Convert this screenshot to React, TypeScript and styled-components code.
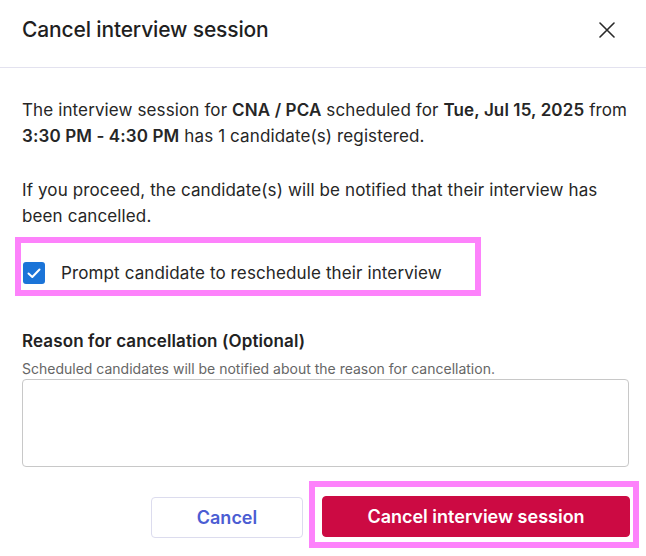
import React from 'react';
import styled, { createGlobalStyle } from 'styled-components';

const GlobalStyle = createGlobalStyle`
  html, body {
    margin: 0;
    padding: 0;
    background: #ffffff;
  }
  body {
    font-family: Inter, "Noto Sans", "Liberation Sans", sans-serif;
    color: #262626;
  }
`;

const Dialog = styled.div`
  width: 646px;
  height: 556px;
  background: #fff;
  overflow: hidden;
`;

const Header = styled.div`
  height: 68px;
  box-sizing: border-box;
  padding: 17px 31px 0 22px;
  display: flex;
  justify-content: space-between;
  align-items: flex-start;
  border-bottom: 1px solid #e3e2ef;
`;

const Title = styled.h2`
  margin: 0;
  font-size: 21px;
  line-height: 25px;
  font-weight: 500;
  color: #1f1f1f;
  letter-spacing: -0.15px;
`;

const CloseButton = styled.button`
  border: none;
  background: none;
  padding: 0;
  margin-top: 5px;
  width: 16px;
  height: 16px;
  cursor: pointer;
  color: #2a2a2a;
  display: flex;
`;

const Body = styled.div`
  padding: 29px 17px 0 22px;
`;

const Paragraph = styled.p<{ $last?: boolean }>`
  margin: 0 0 ${(p) => (p.$last ? '0' : '28px')};
  font-size: 17px;
  line-height: 26px;
  letter-spacing: 0.12px;
  color: #262626;

  b {
    font-weight: 600;
  }
`;

const Highlight = styled.div<{ $pad: string }>`
  display: inline-flex;
  border: 6px solid #fd82fb;
  padding: ${(p) => p.$pad};
`;

const CheckRow = styled.label`
  display: flex;
  align-items: center;
  gap: 16px;
  font-size: 17px;
  line-height: 22px;
  letter-spacing: 0.12px;
  color: #262626;
  cursor: pointer;
`;

const CheckBox = styled.span`
  width: 22px;
  height: 22px;
  border-radius: 3px;
  background: #1b74d8;
  display: flex;
  align-items: center;
  justify-content: center;
  flex-shrink: 0;
`;

const CheckWrap = styled.div`
  margin: 8px 0 0 -7px;
`;

const Field = styled.div`
  margin-top: 33px;
`;

const FieldLabel = styled.div`
  font-size: 17px;
  line-height: 24px;
  font-weight: 600;
  letter-spacing: 0.12px;
  color: #222;
  margin-bottom: 6px;
`;

const HelperText = styled.div`
  font-size: 14px;
  line-height: 20px;
  color: #666;
`;

const TextArea = styled.textarea`
  display: block;
  width: 100%;
  height: 88px;
  box-sizing: border-box;
  border: 1px solid #c8c8c8;
  border-radius: 4px;
  resize: none;
  font-family: inherit;
  font-size: 14px;
  padding: 8px 10px;
  outline: none;
`;

const Footer = styled.div`
  display: flex;
  justify-content: flex-end;
  align-items: flex-end;
  gap: 6px;
  margin: 14px -10px 0 0;
`;

const Button = styled.button<{ $primary?: boolean }>`
  height: 41px;
  box-sizing: border-box;
  border-radius: 4px;
  font-family: inherit;
  font-size: 18px;
  font-weight: 600;
  cursor: pointer;
  border: 1px solid ${(p) => (p.$primary ? '#cc0a43' : '#dcdcee')};
  background: ${(p) => (p.$primary ? '#cc0a43' : '#fff')};
  color: ${(p) => (p.$primary ? '#fff' : '#4b5dd3')};
  width: ${(p) => (p.$primary ? '308px' : '152px')};
  margin-bottom: ${(p) => (p.$primary ? '0' : '10px')};
`;

const CloseIcon = () => (
  <svg width="16" height="16" viewBox="0 0 16 16" fill="none">
    <path d="M1 1L15 15M15 1L1 15" stroke="currentColor" strokeWidth="1.6" strokeLinecap="round" />
  </svg>
);

const CheckIcon = () => (
  <svg width="16" height="16" viewBox="0 0 16 16" fill="none">
    <path d="M2.5 8.5L6.3 12L13.5 4.5" stroke="#fff" strokeWidth="2" strokeLinecap="round" strokeLinejoin="round" />
  </svg>
);

export default function App() {
  return (
    <>
      <GlobalStyle />
      <Dialog>
        <Header>
          <Title>Cancel interview session</Title>
          <CloseButton aria-label="Close">
            <CloseIcon />
          </CloseButton>
        </Header>
        <Body>
          <Paragraph>
            The interview session for <b>CNA / PCA</b> scheduled for <b>Tue, Jul 15, 2025</b> from{' '}
            <b>3:30 PM - 4:30 PM</b> has 1 candidate(s) registered.
          </Paragraph>
          <Paragraph $last>
            If you proceed, the candidate(s) will be notified that their interview has been cancelled.
          </Paragraph>
          <CheckWrap>
            <Highlight $pad="19px 33px 6px 2px">
              <CheckRow>
                <CheckBox>
                  <CheckIcon />
                </CheckBox>
                Prompt candidate to reschedule their interview
              </CheckRow>
            </Highlight>
          </CheckWrap>
          <Field>
            <FieldLabel>Reason for cancellation (Optional)</FieldLabel>
            <HelperText>Scheduled candidates will be notified about the reason for cancellation.</HelperText>
            <TextArea />
          </Field>
          <Footer>
            <Button>Cancel</Button>
            <Highlight $pad="9px 3px 5px 7px">
              <Button $primary>Cancel interview session</Button>
            </Highlight>
          </Footer>
        </Body>
      </Dialog>
    </>
  );
}
